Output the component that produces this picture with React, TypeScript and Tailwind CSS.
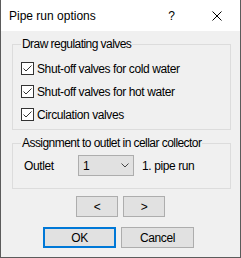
import React from "react";

function CheckBox({ label }: { label: string }) {
  return (
    <label className="flex h-[23px] items-center">
      <span className="flex h-[13px] w-[13px] items-center justify-center border border-[#333333] bg-white">
        <svg width="11" height="11" viewBox="0 0 11 11" fill="none">
          <path d="M1.5 5.5 L4 8 L9.5 2.5" stroke="#333333" strokeWidth="1" />
        </svg>
      </span>
      <span className="ml-[3px]">{label}</span>
    </label>
  );
}

function Btn({ children, primary }: { children: React.ReactNode; primary?: boolean }) {
  return (
    <button
      className={
        primary
          ? "flex h-[21px] w-[73px] items-center justify-center border-2 border-[#0078d7] bg-[#e1e1e1]"
          : "flex h-[21px] w-[73px] items-center justify-center border border-[#adadad] bg-[#e1e1e1]"
      }
    >
      {children}
    </button>
  );
}

export default function App() {
  return (
    <div className="flex h-[258px] w-[241px] flex-col border-x border-b border-[#5b5b5b] bg-[#f0f0f0] font-['Liberation_Sans',sans-serif] text-[12px] tracking-[-0.4px] text-black">
      <div className="flex h-[31px] shrink-0 items-center bg-white tracking-normal">
        <span className="ml-[8px]">Pipe run options</span>
        <span className="ml-auto mr-[37px]">?</span>
        <svg width="10" height="10" viewBox="0 0 10 10" className="mr-[18px]">
          <path d="M0.5 0.5 L9.5 9.5 M9.5 0.5 L0.5 9.5" stroke="#000" strokeWidth="1" />
        </svg>
      </div>

      <fieldset className="ml-[11px] mt-[6px] h-[93px] w-[219px] border border-[#dcdcdc] px-[8px]">
        <legend className="h-[14px] px-[1px] leading-[14px] tracking-[-0.55px]">Draw regulating valves</legend>
        <div className="mt-[6px] flex flex-col">
          <CheckBox label="Shut-off valves for cold water" />
          <CheckBox label="Shut-off valves for hot water" />
          <CheckBox label="Circulation valves" />
        </div>
      </fieldset>

      <fieldset className="ml-[11px] mt-[6px] h-[53px] w-[219px] border border-[#dcdcdc] px-[8px]">
        <legend className="h-[14px] px-[1px] leading-[14px] tracking-[-0.55px]">Assignment to outlet in cellar collector</legend>
        <div className="mt-[5px] flex items-center">
          <span className="ml-[3px] w-[54px]">Outlet</span>
          <div className="flex h-[21px] w-[56px] items-center border border-[#adadad] bg-[#e1e1e1] pl-[4px] pr-[4px]">
            <span>1</span>
            <svg width="8" height="5" viewBox="0 0 8 5" className="ml-auto" fill="none">
              <path d="M0.5 0.5 L4 4 L7.5 0.5" stroke="#444" strokeWidth="1" />
            </svg>
          </div>
          <span className="ml-[8px]">1. pipe run</span>
        </div>
      </fieldset>

      <div className="mt-[7px] flex justify-center gap-[5px] pl-[36px] pr-[36px]">
        <button className="flex h-[21px] w-[42px] items-center justify-center border border-[#adadad] bg-[#e1e1e1]">&lt;</button>
        <button className="flex h-[21px] w-[42px] items-center justify-center border border-[#adadad] bg-[#e1e1e1]">&gt;</button>
      </div>

      <div className="mt-[10px] flex gap-[5px] pl-[42px]">
        <Btn primary>OK</Btn>
        <Btn>Cancel</Btn>
      </div>
    </div>
  );
}
